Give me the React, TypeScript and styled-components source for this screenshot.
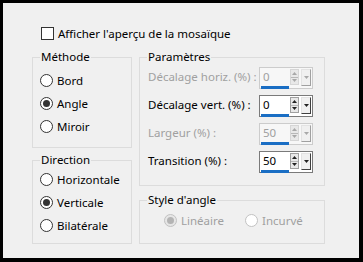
import React from "react";
import styled, { createGlobalStyle, css } from "styled-components";

const Global = createGlobalStyle`
  html, body { margin: 0; padding: 0; background: #000; }
  body { font-family: "Noto Sans", "Open Sans", sans-serif; font-size: 11.5px; color: #000; }
  * { box-sizing: border-box; }
`;

const Frame = styled.div`
  width: 363px;
  height: 262px;
  background: #f0f0f0;
  border: 3px solid #000;
  border-right-width: 4px;
  border-bottom-width: 4px;
  padding: 24px 0 0 29px;
  display: flex;
  flex-direction: column;
`;

const CheckRow = styled.label`
  display: flex;
  align-items: center;
  gap: 4px;
  height: 13px;
  margin-left: 9px;
  white-space: nowrap;
`;

const CheckBox = styled.span`
  width: 13px;
  height: 13px;
  border: 1px solid #333;
  background: #fff;
  flex: none;
`;

const Columns = styled.div`
  display: flex;
  gap: 7px;
  margin-top: 17px;
`;

const Column = styled.div<{ $w: number; $gap: number }>`
  width: ${(p) => p.$w}px;
  display: flex;
  flex-direction: column;
  gap: ${(p) => p.$gap}px;
`;

const Group = styled.div<{ $h: number }>`
  height: ${(p) => p.$h}px;
  border: 1px solid #dcdcdc;
  display: flex;
  flex-direction: column;
`;

const Legend = styled.span`
  display: block;
  align-self: flex-start;
  height: 16px;
  line-height: 16px;
  margin: -9px 0 0 7px;
  padding: 0 1px;
  background: #f0f0f0;
  white-space: nowrap;
`;

const RadioList = styled.div<{ $top: number }>`
  display: flex;
  flex-direction: column;
  margin-top: ${(p) => p.$top}px;
  padding-left: 7px;
`;

const RadioRow = styled.label<{ $h?: number; $w?: number; $disabled?: boolean }>`
  display: flex;
  align-items: center;
  gap: 4px;
  height: ${(p) => p.$h ?? 23}px;
  ${(p) => (p.$w ? `width: ${p.$w}px;` : "")}
  color: ${(p) => (p.$disabled ? "#a0a0a0" : "#000")};
  white-space: nowrap;
`;

const Circle = styled.span<{ $checked?: boolean; $disabled?: boolean }>`
  width: 13px;
  height: 13px;
  border-radius: 50%;
  border: 1px solid ${(p) => (p.$disabled ? "#c2c2c2" : "#333")};
  background: ${(p) => (p.$disabled && p.$checked ? "#e6e6e6" : "#fff")};
  display: flex;
  align-items: center;
  justify-content: center;
  flex: none;
  ${(p) =>
    p.$checked &&
    css`
      &::after {
        content: "";
        width: 7px;
        height: 7px;
        border-radius: 50%;
        background: ${p.$disabled ? "#b4b4b4" : "#333"};
      }
    `}
`;

const ParamList = styled.div`
  display: flex;
  flex-direction: column;
  margin-top: -1px;
  padding: 0 11px 0 8px;
`;

const ParamRow = styled.div<{ $disabled?: boolean }>`
  display: flex;
  align-items: center;
  height: 28px;
  color: ${(p) => (p.$disabled ? "#a0a0a0" : "#000")};
`;

const ParamLabel = styled.span`
  flex: 1;
  white-space: nowrap;
  margin-top: -3px;
`;

const Spin = styled.div<{ $disabled?: boolean }>`
  width: 54px;
  height: 22px;
  display: flex;
  align-items: flex-start;
  border: 1px solid ${(p) => (p.$disabled ? "#cccccc" : "#7a7a7a")};
  background: ${(p) => (p.$disabled ? "#f7f7f7" : "#fff")};
  padding: 1px 1px 0 0;
`;

const Field = styled.div<{ $disabled?: boolean }>`
  position: relative;
  flex: 1;
  height: 19px;
  padding-left: 3px;
  line-height: 16px;
  color: ${(p) => (p.$disabled ? "#a0a0a0" : "#000")};
`;

const Bar = styled.span`
  position: absolute;
  left: 1px;
  bottom: -1px;
  width: 28px;
  height: 3px;
  background: #1a6ec4;
`;

const Arrows = styled.div<{ $disabled?: boolean }>`
  width: 9px;
  height: 16px;
  display: flex;
  flex-direction: column;
  border: 1px solid ${(p) => (p.$disabled ? "#d6d6d6" : "#a0a0a0")};
  background: #e8e8e8;
  margin-right: 2px;
`;

const ArrowCell = styled.div<{ $first?: boolean }>`
  flex: 1;
  display: flex;
  align-items: center;
  justify-content: center;
  ${(p) => p.$first && "border-bottom: 1px solid #b8b8b8;"}
`;

const Drop = styled.div<{ $disabled?: boolean }>`
  width: 10px;
  height: 17px;
  display: flex;
  align-items: center;
  justify-content: center;
  background: #f0f0f0;
  border-top: 1px solid #e3e3e3;
  border-left: 1px solid #e3e3e3;
  border-right: 1px solid ${(p) => (p.$disabled ? "#a0a0a0" : "#404040")};
  border-bottom: 1px solid ${(p) => (p.$disabled ? "#a0a0a0" : "#404040")};
`;

const Tri = ({ up, color }: { up?: boolean; color: string }) => (
  <svg width="5" height="3" viewBox="0 0 5 3">
    <path d={up ? "M0 3 L2.5 0 L5 3 Z" : "M0 0 L5 0 L2.5 3 Z"} fill={color} />
  </svg>
);

const SpinBox = ({ value, disabled }: { value: string; disabled?: boolean }) => {
  const c = disabled ? "#a8a8a8" : "#222";
  return (
    <Spin $disabled={disabled}>
      <Field $disabled={disabled}>
        {value}
        <Bar />
      </Field>
      <Arrows $disabled={disabled}>
        <ArrowCell $first>
          <Tri up color={c} />
        </ArrowCell>
        <ArrowCell>
          <Tri color={c} />
        </ArrowCell>
      </Arrows>
      <Drop $disabled={disabled}>
        <Tri color={c} />
      </Drop>
    </Spin>
  );
};

const StyleRow = styled.div`
  display: flex;
  margin-top: 2px;
  padding-left: 24px;
`;

export default function App() {
  return (
    <>
      <Global />
      <Frame>
        <CheckRow>
          <CheckBox />
          Afficher l'aperçu de la mosaïque
        </CheckRow>
        <Columns>
          <Column $w={100} $gap={12}>
            <Group $h={91}>
              <Legend>Méthode</Legend>
              <RadioList $top={4}>
                <RadioRow>
                  <Circle />
                  Bord
                </RadioRow>
                <RadioRow>
                  <Circle $checked />
                  Angle
                </RadioRow>
                <RadioRow>
                  <Circle />
                  Miroir
                </RadioRow>
              </RadioList>
            </Group>
            <Group $h={84}>
              <Legend>Direction</Legend>
              <RadioList $top={0}>
                <RadioRow>
                  <Circle />
                  Horizontale
                </RadioRow>
                <RadioRow>
                  <Circle $checked />
                  Verticale
                </RadioRow>
                <RadioRow>
                  <Circle />
                  Bilatérale
                </RadioRow>
              </RadioList>
            </Group>
          </Column>
          <Column $w={186} $gap={14}>
            <Group $h={129}>
              <Legend>Paramètres</Legend>
              <ParamList>
                <ParamRow $disabled>
                  <ParamLabel>Décalage horiz. (%) :</ParamLabel>
                  <SpinBox value="0" disabled />
                </ParamRow>
                <ParamRow>
                  <ParamLabel>Décalage vert. (%) :</ParamLabel>
                  <SpinBox value="0" />
                </ParamRow>
                <ParamRow $disabled>
                  <ParamLabel>Largeur (%) :</ParamLabel>
                  <SpinBox value="50" disabled />
                </ParamRow>
                <ParamRow>
                  <ParamLabel>Transition (%) :</ParamLabel>
                  <SpinBox value="50" />
                </ParamRow>
              </ParamList>
            </Group>
            <Group $h={44}>
              <Legend>Style d'angle</Legend>
              <StyleRow>
                <RadioRow $h={20} $w={81} $disabled>
                  <Circle $checked $disabled />
                  Linéaire
                </RadioRow>
                <RadioRow $h={20} $disabled>
                  <Circle $disabled />
                  Incurvé
                </RadioRow>
              </StyleRow>
            </Group>
          </Column>
        </Columns>
      </Frame>
    </>
  );
}
